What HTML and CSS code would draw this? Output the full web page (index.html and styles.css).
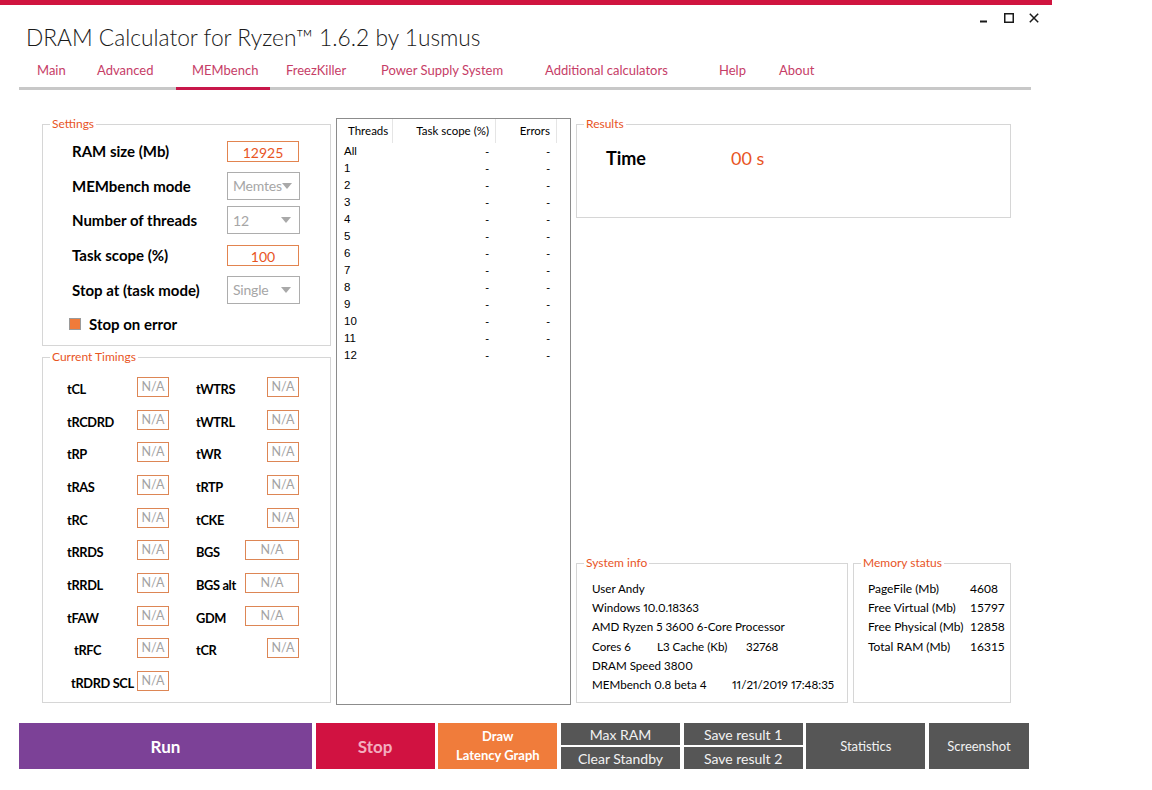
FILE: index.html
```html
<!DOCTYPE html>
<html lang="en">
<head>
<meta charset="utf-8">
<title>DRAM Calculator for Ryzen</title>
<link rel="stylesheet" href="styles.css">
</head>
<body>
<div class="window">
  <div class="stripe"></div>
  <div class="controls">
    <svg viewBox="0 0 10 10" class="ctl"><rect x="1" y="7.5" width="7" height="2" fill="#1a1a1a"/></svg>
    <svg viewBox="0 0 10 10" class="ctl"><rect x="0.75" y="0.75" width="8.5" height="8.5" fill="none" stroke="#1a1a1a" stroke-width="1.5"/></svg>
    <svg viewBox="0 0 10 10" class="ctl"><path d="M0.8 0.8 L9.2 9.2 M9.2 0.8 L0.8 9.2" stroke="#1a1a1a" stroke-width="1.5" fill="none"/></svg>
  </div>
  <h1 class="title">DRAM Calculator for Ryzen™ 1.6.2 by 1usmus</h1>
  <nav class="tabs">
    <span class="tab">Main</span>
    <span class="tab">Advanced</span>
    <span class="tab active">MEMbench</span>
    <span class="tab">FreezKiller</span>
    <span class="tab">Power Supply System</span>
    <span class="tab">Additional calculators</span>
    <span class="tab">Help</span>
    <span class="tab">About</span>
  </nav>

  <main class="content">
    <div class="col-left">
      <fieldset class="group settings">
        <legend>Settings</legend>
        <div class="set-grid">
          <span class="lbl">RAM size (Mb)</span><span class="tb">12925</span>
          <span class="lbl">MEMbench mode</span><span class="sel"><span class="sel-text">Memtes</span><span class="arrow"></span></span>
          <span class="lbl">Number of threads</span><span class="sel"><span class="sel-text">12</span><span class="arrow"></span></span>
          <span class="lbl">Task scope (%)</span><span class="tb">100</span>
          <span class="lbl">Stop at (task mode)</span><span class="sel"><span class="sel-text">Single</span><span class="arrow"></span></span>
          <span class="chk"><span class="cb"></span>Stop on error</span>
        </div>
      </fieldset>

      <fieldset class="group timings">
        <legend>Current Timings</legend>
        <div class="t-grid">
          <span class="tl">tCL</span><span class="na">N/A</span><span class="tl">tWTRS</span><span class="na">N/A</span>
          <span class="tl">tRCDRD</span><span class="na">N/A</span><span class="tl">tWTRL</span><span class="na">N/A</span>
          <span class="tl">tRP</span><span class="na">N/A</span><span class="tl">tWR</span><span class="na">N/A</span>
          <span class="tl">tRAS</span><span class="na">N/A</span><span class="tl">tRTP</span><span class="na">N/A</span>
          <span class="tl">tRC</span><span class="na">N/A</span><span class="tl">tCKE</span><span class="na">N/A</span>
          <span class="tl">tRRDS</span><span class="na">N/A</span><span class="tl">BGS</span><span class="na wide">N/A</span>
          <span class="tl">tRRDL</span><span class="na">N/A</span><span class="tl">BGS alt</span><span class="na wide">N/A</span>
          <span class="tl">tFAW</span><span class="na">N/A</span><span class="tl">GDM</span><span class="na wide">N/A</span>
          <span class="tl indent2">tRFC</span><span class="na">N/A</span><span class="tl">tCR</span><span class="na">N/A</span>
          <span class="tl indent1">tRDRD SCL</span><span class="na">N/A</span>
        </div>
      </fieldset>
    </div>

    <div class="list">
      <div class="lhead">
        <span class="h1">Threads</span><span class="h2">Task scope (%)</span><span class="h3">Errors</span>
      </div>
      <div class="lrows">
        <span>All</span><span class="r">-</span><span class="r">-</span>
        <span>1</span><span class="r">-</span><span class="r">-</span>
        <span>2</span><span class="r">-</span><span class="r">-</span>
        <span>3</span><span class="r">-</span><span class="r">-</span>
        <span>4</span><span class="r">-</span><span class="r">-</span>
        <span>5</span><span class="r">-</span><span class="r">-</span>
        <span>6</span><span class="r">-</span><span class="r">-</span>
        <span>7</span><span class="r">-</span><span class="r">-</span>
        <span>8</span><span class="r">-</span><span class="r">-</span>
        <span>9</span><span class="r">-</span><span class="r">-</span>
        <span>10</span><span class="r">-</span><span class="r">-</span>
        <span>11</span><span class="r">-</span><span class="r">-</span>
        <span>12</span><span class="r">-</span><span class="r">-</span>
      </div>
    </div>

    <div class="col-right">
      <fieldset class="group results">
        <legend>Results</legend>
        <div class="res-row"><span class="res-lbl">Time</span><span class="res-val">00 s</span></div>
      </fieldset>

      <div class="bottom-row">
        <fieldset class="group sysinfo">
          <legend>System info</legend>
          <div class="info">
            <div class="line">User Andy</div>
            <div class="line">Windows 10.0.18363</div>
            <div class="line">AMD Ryzen 5 3600 6-Core Processor</div>
            <div class="line"><span class="c-cores">Cores 6</span><span class="c-l3">L3 Cache (Kb)</span><span>32768</span></div>
            <div class="line">DRAM Speed 3800</div>
            <div class="line"><span class="c-ver">MEMbench 0.8 beta 4</span><span>11/21/2019 17:48:35</span></div>
          </div>
        </fieldset>
        <fieldset class="group memstat">
          <legend>Memory status</legend>
          <div class="mem">
            <span>PageFile (Mb)</span><span>4608</span>
            <span>Free Virtual (Mb)</span><span>15797</span>
            <span>Free Physical (Mb)</span><span>12858</span>
            <span>Total RAM (Mb)</span><span>16315</span>
          </div>
        </fieldset>
      </div>
    </div>
  </main>

  <div class="buttons">
    <div class="btn run">Run</div>
    <div class="btn stop">Stop</div>
    <div class="btn draw">Draw<br>Latency Graph</div>
    <div class="stack">
      <div class="btn gray half">Max RAM</div>
      <div class="btn gray half">Clear Standby</div>
    </div>
    <div class="stack">
      <div class="btn gray half">Save result 1</div>
      <div class="btn gray half">Save result 2</div>
    </div>
    <div class="btn gray big">Statistics</div>
    <div class="btn gray big shot">Screenshot</div>
  </div>
</div>
</body>
</html>
```

FILE: styles.css
```css
* { box-sizing: border-box; }
html, body { margin: 0; padding: 0; background: #ffffff; }
body {
  font-family: Lato, "Open Sans", "Noto Sans", sans-serif;
  color: #000;
  width: 1152px;
  height: 790px;
  overflow: hidden;
}
.window { width: 1052px; }
.stripe { height: 5px; background: #d0143f; }

.controls {
  display: flex;
  justify-content: flex-end;
  gap: 15px;
  height: 18px;
  padding: 8px 13px 0 0;
}
.ctl { width: 10px; height: 10px; display: block; }

.title {
  margin: 0;
  padding-left: 26px;
  font-weight: 300;
  font-size: 22.75px;
  line-height: 30px;
  color: #1a1a1a;
}

.tabs {
  display: grid;
  grid-template-columns: 60px 95px 94px 95px 164px 174px 60px 1fr;
  margin-left: 19px;
  width: 1012px;
  padding-left: 2px;
  height: 37px;
  border-bottom: 3px solid #c8c8c8;
}
.tab {
  padding-left: 16px;
  font-size: 13px;
  line-height: 34px;
  color: #c63d67;
  white-space: nowrap;
}
.tab.active {
  border-bottom: 3px solid #c8174a;
  margin-bottom: -3px;
}

.content {
  display: grid;
  grid-template-columns: 289px 235px 435px;
  column-gap: 5px;
  align-items: start;
  margin: 27px 0 0 42px;
  height: 588px;
}

.group {
  margin: 0;
  padding: 0;
  border: 1px solid #d6d6d6;
  min-width: 0;
}
.group legend {
  margin-left: 7px;
  padding: 0 2px;
  font-size: 12px;
  line-height: 14px;
  color: #e8551f;
}

.col-left { display: flex; flex-direction: column; gap: 4px; }
.settings { height: 229px; }
.set-grid {
  display: grid;
  grid-template-columns: 155px 73px;
  grid-auto-rows: 34.6px;
  align-items: center;
  padding: 3px 0 0 29px;
}
.lbl { font-weight: 700; font-size: 15px; white-space: nowrap; }
.tb {
  display: flex;
  align-items: center;
  justify-content: center;
  width: 72px;
  height: 21px;
  border: 1px solid #e2844f;
  color: #e8551f;
  font-size: 14px;
  padding-top: 2px;
}
.sel {
  display: flex;
  align-items: center;
  width: 73px;
  height: 28px;
  border: 1px solid #adadad;
  color: #a6a6a6;
  font-size: 14px;
  padding-left: 5px;
}
.sel-text { flex: 1; white-space: nowrap; letter-spacing: -0.2px; }
.arrow {
  flex: none;
  width: 0;
  height: 0;
  border-left: 5.5px solid transparent;
  border-right: 5.5px solid transparent;
  border-top: 6px solid #a9a9a9;
  margin-right: 8px;
}
.chk {
  grid-column: 1 / 3;
  display: flex;
  align-items: center;
  gap: 8px;
  margin-left: -3px;
  font-weight: 700;
  font-size: 15px;
}
.cb {
  width: 12px;
  height: 12px;
  border: 1px solid #9a9a9a;
  background: #f07b3a;
}

.timings { height: 353px; }
.t-grid {
  display: grid;
  grid-template-columns: 70px 59px 49px 54px;
  grid-auto-rows: 32.7px;
  align-items: center;
  padding: 6.6px 0 0 24px;
}
.tl {
  font-weight: 700;
  font-size: 12.8px;
  letter-spacing: -0.35px;
  margin-top: 4px;
  white-space: nowrap;
}
.indent1 { padding-left: 4px; }
.indent2 { padding-left: 7px; }
.na {
  width: 32px;
  height: 20px;
  border: 1px solid #dd8655;
  color: #a3a3a3;
  font-size: 12.5px;
  line-height: 12px;
  padding-top: 3px;
  text-align: center;
}
.t-grid .na:nth-child(4n) { justify-self: end; }
.na.wide { width: 54px; }

.list {
  margin-top: 1px;
  height: 587px;
  border: 1px solid #8c8c8c;
}
.lhead {
  display: grid;
  grid-template-columns: 56px 103px 61px;
  height: 24px;
  font-size: 11.5px;
  line-height: 24px;
}
.lhead span { border-right: 1px solid #e5e5e5; white-space: nowrap; }
.h1 { padding-left: 11px; }
.h2, .h3 { text-align: right; padding-right: 6px; }
.lrows {
  display: grid;
  grid-template-columns: 56px 103px 61px;
  grid-auto-rows: 17px;
  font-family: "Liberation Sans", Arial, sans-serif;
  font-size: 11.5px;
  line-height: 17px;
}
.lrows span { padding-left: 7px; }
.lrows .r { text-align: right; padding-right: 7px; }

.col-right {
  display: flex;
  flex-direction: column;
  justify-content: space-between;
  height: 586px;
}
.results { height: 101px; }
.res-row {
  display: flex;
  align-items: center;
  height: 26px;
  margin-top: 14px;
  padding-left: 29px;
  font-size: 18px;
}
.res-lbl { font-weight: 700; width: 125px; }
.res-val { color: #e8551f; }

.bottom-row { display: flex; gap: 5px; }
.sysinfo { width: 272px; height: 147px; }
.memstat { width: 158px; height: 147px; }
.info {
  padding: 9px 0 0 15px;
  font-size: 11.6px;
  font-variant-numeric: proportional-nums;
}
.line { height: 19.2px; line-height: 19.2px; display: flex; white-space: nowrap; }
.c-cores { width: 65px; }
.c-l3 { width: 89px; }
.c-ver { width: 140px; }
.mem {
  display: grid;
  grid-template-columns: 102px auto;
  grid-auto-rows: 19.2px;
  line-height: 19.2px;
  padding: 9px 0 0 14px;
  font-size: 12px;
  white-space: nowrap;
}

.buttons {
  display: flex;
  gap: 3.67px;
  margin: 18px 0 0 19px;
  height: 46px;
}
.btn {
  display: flex;
  align-items: center;
  justify-content: center;
  text-align: center;
  color: #ffffff;
}
.run { width: 293px; background: #7c4197; font-weight: 700; font-size: 17px; }
.stop { width: 119px; background: #d11241; font-weight: 700; font-size: 17px; color: #f3adbf; }
.draw { width: 119px; background: #f07c3b; font-weight: 700; font-size: 13px; line-height: 19px; }
.stack { width: 119px; display: flex; flex-direction: column; gap: 2px; }
.gray { background: #565656; color: #f2f2f2; }
.half { height: 22px; font-size: 14px; }
.big { width: 119px; font-size: 13px; }
.big.shot { width: 100px; }
```
